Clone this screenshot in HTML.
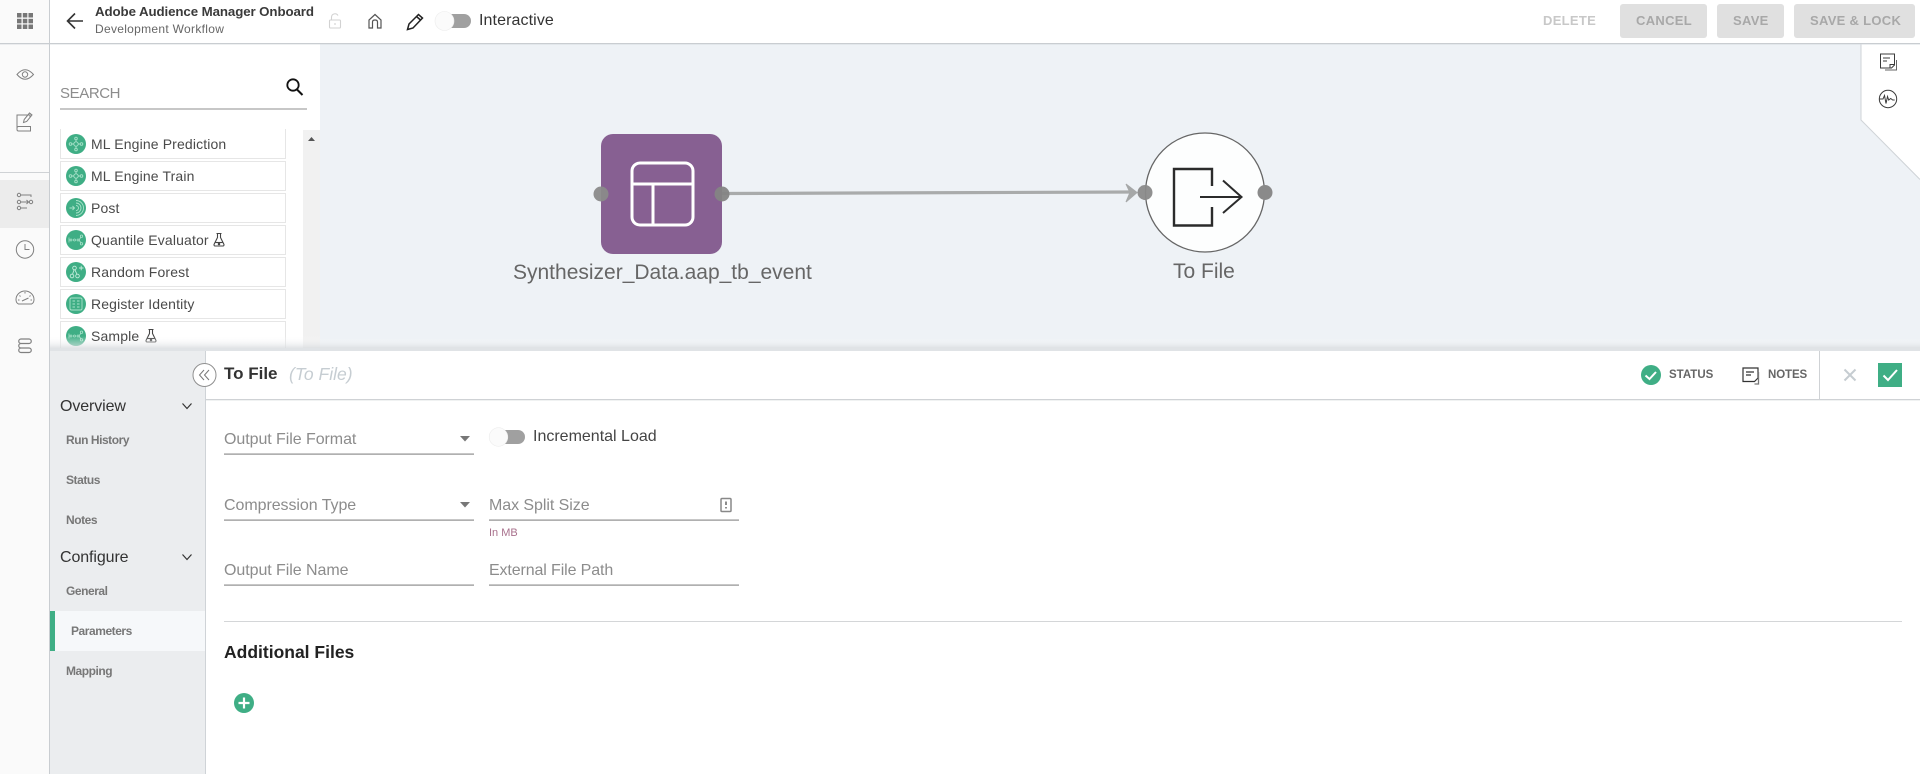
<!DOCTYPE html>
<html><head><meta charset="utf-8"><title>To File</title>
<style>
html,body{margin:0;padding:0;width:1920px;height:774px;overflow:hidden;background:#fff;font-family:"Liberation Sans",sans-serif}
svg{position:absolute;left:0;top:0}
.t{position:absolute;white-space:nowrap;line-height:20px;height:20px;font-size:14px;color:#444}
.li{color:#4a4a4a;left:91px;font-size:14px;letter-spacing:.14px}
.ph{font-size:16px;color:#8c8c8c;letter-spacing:-.06px}
.nav{font-size:12px;font-weight:700;color:#777;letter-spacing:-.45px}
.sec{font-size:16px;color:#333;left:60px;letter-spacing:-.1px}
.btn{font-size:13px;font-weight:700;color:#a8a8a8;letter-spacing:.3px}
</style></head><body>
<svg width="1920" height="774" viewBox="0 0 1920 774" fill="none">
<defs>
<linearGradient id="fade" x1="0" y1="0" x2="0" y2="1"><stop offset="0" stop-color="#fff" stop-opacity="0"/><stop offset="1" stop-color="#d8dbde" stop-opacity=".75"/></linearGradient>
<g id="flask" stroke="#444" stroke-width="1.100"><path d="M-2.500-6.500h5M-1.500-6.500v4L-5 4.500q0 1.500 1 1.500h8q1 0 1-1.500L1.500-2.500v-4"/><path d="M-3.500 2.500h7"/><circle cx="0" cy="4" r=".7" fill="#444"/></g>
<g id="net" stroke="#a9e2ca" stroke-width=".9"><circle r="2.200"/><circle cx="0" cy="-5.500" r="1.300"/><circle cx="0" cy="5.500" r="1.300"/><circle cx="-5.500" r="1.300"/><circle cx="5.500" r="1.300"/><path d="M0-4.200v2M0 2.200v2M-4.200 0h2M2.200 0h2"/></g>
<g id="share" stroke="#a9e2ca" stroke-width=".8"><circle cx="-5" r="1"/><circle cx="-1.500" r="1"/><circle cx="2" r="1"/><circle cx="5.500" cy="-3.800" r="1.200"/><circle cx="5.500" cy="3.800" r="1.200"/><path d="M3 0l2-3M3 0l2 3M-7-2.500v5"/></g>
</defs>

<!-- backgrounds -->
<rect x="0" y="0" width="49" height="774" fill="#fafafa"/>
<rect x="0" y="180" width="49" height="48" fill="#ececec"/>
<rect x="0" y="172" width="49" height="1" fill="#cfd2d5"/>
<rect x="49" y="0" width="1" height="774" fill="#c9cdd1"/>
<rect x="320" y="44" width="1600" height="304" fill="#eef2f6"/>
<rect x="303" y="130" width="17" height="218" fill="#f1f1f1"/>
<rect x="0" y="43" width="1920" height="1.300" fill="#c9cdd1"/>

<!-- right corner panel -->
<path d="M1861 44.500V120L1920 179.500V44.500Z" fill="#fff"/>
<path d="M1861 44.500V120L1920 179.500" stroke="#cfd3d7"/>
<g stroke="#3c3c3c" stroke-width="1">
<path d="M1880.500 54h14v11l-3 3h-11zM1883 58h7M1883 61h4M1890 68v-3.500h4"/>
<path d="M1885 70h11.500V60" stroke="#666"/>
<circle cx="1888" cy="99" r="8.700"/>
<path d="M1879.500 99h3.500l1.500-3.500 1.500 8 1.500-7 1.200 3.500 2-1.500 2 1.500h2"/>
</g>

<!-- top-left grid -->
<g fill="#777"><rect x="17" y="13" width="4.500" height="4.500"/><rect x="22.800" y="13" width="4.500" height="4.500"/><rect x="28.500" y="13" width="4.500" height="4.500"/><rect x="17" y="18.800" width="4.500" height="4.500"/><rect x="22.800" y="18.800" width="4.500" height="4.500"/><rect x="28.500" y="18.800" width="4.500" height="4.500"/><rect x="17" y="24.500" width="4.500" height="4.500"/><rect x="22.800" y="24.500" width="4.500" height="4.500"/><rect x="28.500" y="24.500" width="4.500" height="4.500"/></g>
<!-- back -->
<path d="M83 21H68M75 13.500L67.500 21l7.500 7.500" stroke="#333" stroke-width="1.600"/>
<!-- lock -->
<g stroke="#d2d2d2" stroke-width="1.100"><rect x="329.500" y="20" width="11" height="8" rx="1"/><path d="M331.500 20v-3a3.500 3.500 0 0 1 6.500-1.500M335 23v2"/></g>
<!-- home -->
<path d="M369 28v-8l6-5.500 6 5.500v8h-3.500v-6q0-2-2.500-2t-2.500 2v6z" stroke="#555" stroke-width="1.200"/>
<!-- pencil -->
<path d="M407.500 29.500l1.500-5.500L418.500 14.500l4 3.500L413 28zM416.500 16.500l4 3.500" stroke="#222" stroke-width="1.500"/>
<!-- toggle top -->
<rect x="442" y="14" width="29" height="14" rx="7" fill="#a0a0a0"/>
<circle cx="444.500" cy="21" r="9.500" fill="#fbfbfb" stroke="#ececec" stroke-width=".6"/>
<!-- buttons -->
<rect x="1620" y="4" width="87" height="34" rx="3" fill="#e0e0e0"/>
<rect x="1717" y="4" width="67" height="34" rx="3" fill="#e0e0e0"/>
<rect x="1794" y="4" width="121" height="34" rx="3" fill="#e0e0e0"/>

<!-- rail icons -->
<g stroke="#808080" stroke-width="1">
<path d="M17 74.500q8-9.500 16.500 0q-8.500 9.500-16.500 0z"/><circle cx="25" cy="74.500" r="2.700"/>
<path d="M30 117v-2h-13v14.500q0 1.500 1.500 1.500H30.500v-4.500h-12q-1.500 0-1.500 1.500M23.500 122.500l.7-3 5.300-6.500 2.500 2-5.300 6.500z"/>
<circle cx="19" cy="195" r="1.700"/><circle cx="19" cy="202" r="1.700"/><circle cx="19" cy="208" r="1.700"/><circle cx="31" cy="202" r="1.700"/>
<path d="M21 195h10v2M21 202h8M21 208h6M26.500 200l2 2-2 2"/>
<circle cx="25" cy="249.500" r="8.700"/><path d="M25 244v5.500h4.500"/>
<path d="M18.500 304q-2.500-1-2.500-4.500a9 8.500 0 0 1 18 0q0 3.500-2.500 4.500zM22 301l6.500-3M25 292v1.500M19.500 295.500l1 1M30.500 295.500l-1 1M18 300h1.500M30.500 300h1.500"/>
<path d="M21 339h8a2 2 0 0 1 0 4.500H21a2 2 0 0 0 0 4.500h8a2.200 2.200 0 0 1 0 4.500H21a2 2 0 0 1 0-4.500M21 339a2.200 2.200 0 0 0 0 4.500" stroke-width="1.200"/>
</g>

<!-- search -->
<rect x="60" y="108.500" width="247" height="1" fill="#8f8f8f"/>
<circle cx="293" cy="85" r="5.700" stroke="#111" stroke-width="1.800"/><path d="M297 89.500l5.500 5.500" stroke="#111" stroke-width="2"/>

<!-- list -->
<g stroke="#e6e6e6" fill="#fff">
<path d="M60.500 129v29.500H285.500V129"/>
<rect x="60.500" y="161.500" width="225" height="29"/>
<rect x="60.500" y="193.500" width="225" height="29"/>
<rect x="60.500" y="225.500" width="225" height="29"/>
<rect x="60.500" y="257.500" width="225" height="29"/>
<rect x="60.500" y="289.500" width="225" height="29"/>
<rect x="60.500" y="321.500" width="225" height="30"/>
</g>
<g fill="#3fae85"><circle cx="76" cy="144" r="10"/><circle cx="76" cy="176" r="10"/><circle cx="76" cy="208" r="10"/><circle cx="76" cy="240" r="10"/><circle cx="76" cy="272" r="10"/><circle cx="76" cy="304" r="10"/><circle cx="76" cy="336" r="10"/></g>
<use href="#net" x="76" y="144"/><use href="#net" x="76" y="176"/>
<g stroke="#a9e2ca" stroke-width=".9"><path d="M76 200.500a7.500 7.500 0 0 1 0 15M76 203a5 5 0 0 1 0 10M76 205.500a2.500 2.500 0 0 1 0 5M69.500 208h5M72.500 206l2 2-2 2"/></g>
<use href="#share" x="76" y="240"/><use href="#share" x="76" y="336"/>
<g stroke="#c4ebdb" stroke-width=".9"><circle cx="74.500" cy="268" r="1.800"/><circle cx="72" cy="276" r="1.800"/><circle cx="77.500" cy="276" r="1.800"/><path d="M74 270l-1.500 4.300M75 270l2 4.300M79 268h4.500M81.200 265.800v4.500"/></g>
<g stroke="#a9e2ca" stroke-width=".9"><rect x="70" y="298" width="12" height="12" rx="1.500"/><path d="M72.500 301h2.500M77 301h2.500M72.500 304h2.500M77 304h2.500M72.500 307h2.500M77 307h2.500"/></g>
<use href="#flask" x="219" y="240"/><use href="#flask" x="151" y="336"/>
<path d="M311.500 137l-3.500 4h7z" fill="#555"/>
<rect x="50" y="336" width="270" height="12" fill="url(#fade)"/>
<rect x="320" y="338" width="1600" height="10" fill="url(#fade)"/>

<!-- canvas: edge -->
<path d="M722 193.500Q900 193 1132 192" stroke="#a9abab" stroke-width="3.200"/>
<path d="M1126 184l11 8.500-11 9.500 4-9.500z" fill="#a6a8a8" stroke="#a6a8a8"/>
<!-- node 1 -->
<rect x="601" y="134" width="121" height="120" rx="12" fill="#876092"/>
<g stroke="#fff" stroke-width="3"><rect x="632" y="163" width="61" height="62" rx="8"/><path d="M632 184h61M653 184v41"/></g>
<ellipse cx="601" cy="194" rx="7.500" ry="7.500" fill="#8a8a8a" fill-opacity=".95"/>
<ellipse cx="722" cy="194" rx="7.500" ry="7.500" fill="#848484" fill-opacity=".95"/>
<!-- node 2 -->
<circle cx="1205" cy="192.500" r="59.500" fill="#fdfefe" stroke="#666" stroke-width="1.300"/>
<path d="M1212 186V169H1174V225.500H1212V207" stroke="#2b2b2b" stroke-width="2.400"/>
<path d="M1200 197H1241M1223 180.500L1241.500 197L1223 213" stroke="#2b2b2b" stroke-width="2"/>
<ellipse cx="1145" cy="192.500" rx="7.500" ry="7.500" fill="#8a8a8a" fill-opacity=".95"/>
<ellipse cx="1265" cy="192.500" rx="7.500" ry="7.500" fill="#8a8a8a"/>

<!-- bottom panel -->
<rect x="50" y="351" width="1870" height="423" fill="#fff"/>
<rect x="50" y="348" width="1870" height="3" fill="#e0e3e6"/>
<rect x="50" y="351" width="155" height="423" fill="#ebedef"/>
<rect x="205" y="351" width="1" height="423" fill="#cfd3d7"/>
<rect x="206" y="399" width="1714" height="1.300" fill="#cfd2d5"/>
<rect x="50" y="611" width="155" height="40" fill="#f6f8fa"/>
<rect x="50" y="611" width="5" height="40" fill="#3fae85"/>
<circle cx="204.500" cy="375" r="11.500" fill="#fff" stroke="#8f8f8f" stroke-width="1"/>
<path d="M204 370l-4.500 5 4.500 5M209 370l-4.500 5 4.500 5" stroke="#777" stroke-width="1"/>
<path d="M182.500 403.500l4.500 5 4.500-5M182.500 554.500l4.500 5 4.500-5" stroke="#333" stroke-width="1.200"/>

<!-- header right -->
<circle cx="1651" cy="375" r="10" fill="#3fae85"/>
<path d="M1645.500 375.500l4 3.500 6.500-7" stroke="#fff" stroke-width="2"/>
<g stroke="#333" stroke-width="1.200"><path d="M1743 368h15v10l-3.500 3.500H1743zM1746 372h8M1746 375h5"/></g>
<path d="M1754.500 384H1758.500V372" stroke="#777" stroke-width="1.300"/>
<rect x="1819" y="351" width="1" height="48" fill="#cfd2d5"/>
<path d="M1844.500 369.500l11 11M1855.500 369.500l-11 11" stroke="#c6ccd1" stroke-width="2"/>
<rect x="1878" y="363" width="24" height="24" fill="#3fae85"/>
<path d="M1883.500 375.500l4.500 4.500 9-10" stroke="#fff" stroke-width="2"/>

<!-- form -->
<g fill="#8f8f8f">
<rect x="224" y="453.500" width="250" height="1.200"/>
<rect x="224" y="519.500" width="250" height="1.200"/>
<rect x="489" y="519.500" width="250" height="1.200"/>
<rect x="224" y="584.500" width="250" height="1.200"/>
<rect x="489" y="584.500" width="250" height="1.200"/>
</g>
<path d="M460 436h10l-5 5.500z" fill="#777"/>
<path d="M460 502h10l-5 5.500z" fill="#777"/>
<rect x="496" y="430" width="29" height="14" rx="7" fill="#a0a0a0"/>
<circle cx="498.500" cy="437" r="9.300" fill="#fbfbfb" stroke="#ececec" stroke-width=".6"/>
<rect x="721" y="498.500" width="10" height="13" rx="1" stroke="#888" stroke-width="1.500"/>
<path d="M726 501.500v3.500M726 507v1.500" stroke="#666" stroke-width="1.500"/>
<rect x="224" y="621" width="1678" height="1" fill="#d4d6d8"/>
<circle cx="244" cy="703" r="10" fill="#3fae85"/>
<path d="M244 697.500v11M238.500 703h11" stroke="#fff" stroke-width="2.200"/>
</svg>

<!-- top bar text -->
<div class="t" style="left:95px;top:2px;font-weight:700;font-size:13.300px;color:#3a3a3a;letter-spacing:-.1px">Adobe Audience Manager Onboard</div>
<div class="t" style="left:95px;top:19px;font-size:12px;color:#666;letter-spacing:.3px">Development Workflow</div>
<div class="t" style="left:479px;top:11px;font-size:16px;color:#333;letter-spacing:.1px">Interactive</div>
<div class="t btn" style="left:1543px;top:11px;color:#c8c8c8">DELETE</div>
<div class="t btn" style="left:1636px;top:11px">CANCEL</div>
<div class="t btn" style="left:1733px;top:11px">SAVE</div>
<div class="t btn" style="left:1810px;top:11px">SAVE &amp; LOCK</div>

<!-- list text -->
<div class="t" style="left:60px;top:84px;font-size:15px;letter-spacing:-.4px;color:#8c8c8c">SEARCH</div>
<div class="t li" style="top:134px">ML Engine Prediction</div>
<div class="t li" style="top:166px">ML Engine Train</div>
<div class="t li" style="top:198px">Post</div>
<div class="t li" style="top:230px">Quantile Evaluator</div>
<div class="t li" style="top:262px">Random Forest</div>
<div class="t li" style="top:294px">Register Identity</div>
<div class="t li" style="top:326px">Sample</div>

<!-- canvas labels -->
<div class="t" style="left:513px;top:263px;font-size:21px;color:#666">Synthesizer_Data.aap_tb_event</div>
<div class="t" style="left:1173px;top:262px;font-size:21px;color:#666">To File</div>

<!-- panel header -->
<div class="t" style="left:224px;top:364px;font-size:17px;font-weight:700;color:#333">To File</div>
<div class="t" style="left:289px;top:364px;font-size:17.500px;font-style:italic;color:#c6cdd2">(To File)</div>
<div class="t" style="left:1669px;top:365px;font-size:11.500px;font-weight:700;color:#666">STATUS</div>
<div class="t" style="left:1768px;top:365px;font-size:11.500px;font-weight:700;color:#666;letter-spacing:-.1px">NOTES</div>

<!-- sidebar -->
<div class="t sec" style="top:397px">Overview</div>
<div class="t nav" style="left:66px;top:430px">Run History</div>
<div class="t nav" style="left:66px;top:470px">Status</div>
<div class="t nav" style="left:66px;top:510px">Notes</div>
<div class="t sec" style="top:548px">Configure</div>
<div class="t nav" style="left:66px;top:581px">General</div>
<div class="t nav" style="left:71px;top:621px">Parameters</div>
<div class="t nav" style="left:66px;top:661px">Mapping</div>

<!-- form labels -->
<div class="t ph" style="left:224px;top:430px">Output File Format</div>
<div class="t" style="left:533px;top:427px;font-size:16px;color:#444">Incremental Load</div>
<div class="t ph" style="left:224px;top:496px">Compression Type</div>
<div class="t ph" style="left:489px;top:496px">Max Split Size</div>
<div class="t" style="left:489px;top:523px;font-size:11px;color:#a8708c">In MB</div>
<div class="t ph" style="left:224px;top:561px">Output File Name</div>
<div class="t ph" style="left:489px;top:561px;letter-spacing:-.12px">External File Path</div>
<div class="t" style="left:224px;top:642px;font-size:17.500px;font-weight:700;color:#222">Additional Files</div>
</body></html>
